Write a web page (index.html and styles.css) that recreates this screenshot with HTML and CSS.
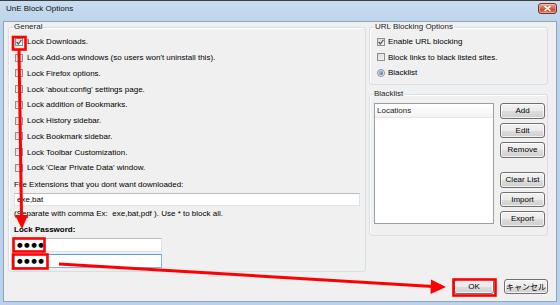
FILE: index.html
```html
<!DOCTYPE html>
<html lang="en">
<head>
    <meta charset="UTF-8">
    <title>UnE Block Options</title>
    <link rel="stylesheet" href="styles.css">
</head>
<body>
    <div class="window">
        <div class="titlebar">
            <span class="title">UnE Block Options</span>
            <span class="close">
                <svg width="9" height="7" viewBox="0 0 9 7"><path d="M1.5 1 L7.5 6 M7.5 1 L1.5 6" stroke="#fff" stroke-width="1.6"/></svg>
            </span>
        </div>

        <div class="client">
            <div class="main">
                <fieldset class="group general">
                    <legend>General</legend>
                    <label class="check"><span class="box checked"><svg width="6" height="6" viewBox="0 0 6 6"><path d="M0.6 3 L2.3 5 L5.4 0.8" fill="none" stroke="#555" stroke-width="1.2"/></svg></span>Lock Downloads.</label>
                    <label class="check"><span class="box"></span>Lock Add-ons windows (so users won't uninstall this).</label>
                    <label class="check"><span class="box"></span>Lock Firefox options.</label>
                    <label class="check"><span class="box"></span>Lock 'about:config' settings page.</label>
                    <label class="check"><span class="box"></span>Lock addition of Bookmarks.</label>
                    <label class="check"><span class="box"></span>Lock History sidebar.</label>
                    <label class="check"><span class="box"></span>Lock Bookmark sidebar.</label>
                    <label class="check"><span class="box"></span>Lock Toolbar Customization.</label>
                    <label class="check"><span class="box"></span>Lock 'Clear Private Data' window.</label>

                    <div class="field-label">File Extensions that you dont want downloaded:</div>
                    <div class="textbox wide">exe,bat</div>
                    <div class="hint">(Separate with comma Ex:&nbsp; exe,bat,pdf ). Use * to block all.</div>
                    <div class="field-label strong">Lock Password:</div>
                    <div class="textbox pass">●●●●</div>
                    <div class="textbox pass focus">●●●●</div>
                </fieldset>

                <div class="side">
                    <fieldset class="group url">
                        <legend>URL Blocking Options</legend>
                        <label class="check short"><span class="box checked"><svg width="6" height="6" viewBox="0 0 6 6"><path d="M0.6 3 L2.3 5 L5.4 0.8" fill="none" stroke="#555" stroke-width="1.2"/></svg></span>Enable URL blocking</label>
                        <label class="check short"><span class="box"></span>Block links to black listed sites.</label>
                        <label class="check short"><span class="radio"><span class="dot"></span></span>Blacklist</label>
                    </fieldset>

                    <fieldset class="group blacklist">
                        <legend>Blacklist</legend>
                        <div class="list-row">
                            <div class="listbox">
                                <div class="list-head">Locations</div>
                            </div>
                            <div class="list-buttons">
                                <button class="btn">Add</button>
                                <button class="btn">Edit</button>
                                <button class="btn">Remove</button>
                                <button class="btn spaced">Clear List</button>
                                <button class="btn">Import</button>
                                <button class="btn">Export</button>
                            </div>
                        </div>
                    </fieldset>
                </div>
            </div>

            <div class="footer">
                <button class="btn ok">OK</button>
                <button class="btn cancel">キャンセル</button>
            </div>
        </div>
    </div>

    <!-- red annotations drawn over the dialog -->
    <svg class="marks" width="560" height="305" viewBox="0 0 560 305">
        <g fill="none" stroke="#f00" stroke-width="2.6">
            <rect x="13" y="37" width="12.5" height="12.5"/>
            <rect x="13.5" y="238.5" width="31" height="13"/>
            <rect x="13" y="254.5" width="34.5" height="14"/>
            <rect x="453.5" y="279.5" width="42" height="16"/>
        </g>
        <g stroke="#f00" stroke-width="3" fill="#f00">
            <line x1="19" y1="50" x2="21.5" y2="217"/>
            <polygon points="15,215 28,215 22,229" stroke="none"/>
            <line x1="59" y1="264" x2="433" y2="286.5"/>
            <polygon points="431,279.5 446,287 430.5,294" stroke="none"/>
        </g>
    </svg>
</body>
</html>
```

FILE: styles.css
```css
* {
    box-sizing: border-box;
}
html, body {
    margin: 0;
    padding: 0;
}
body {
    position: relative;
    width: 560px;
    height: 305px;
    overflow: hidden;
    font-family: "Liberation Sans", Arial, sans-serif;
    font-size: 8px;
    color: #000;
    background: #b9d1ea;
}
.window {
    width: 560px;
    height: 305px;
    display: flex;
    flex-direction: column;
    background: linear-gradient(#c9dcf0, #b9d1ea 30px, #b9d1ea);
    border-top: 1px solid #3c3c3c;
    padding: 0 3px 3px 3px;
}
.titlebar {
    height: 20px;
    display: flex;
    justify-content: space-between;
    align-items: flex-start;
}
.title {
    padding: 3px 0 0 3px;
    line-height: 10px;
    color: #111;
}
.close {
    width: 19px;
    height: 11px;
    margin-top: 2px;
    display: flex;
    align-items: center;
    justify-content: center;
    border: 1px solid #7a2f25;
    border-radius: 3px;
    background: linear-gradient(#e8a99c, #d0644f 50%, #c3452f 51%, #d77a5c);
    box-shadow: inset 0 0 0 1px rgba(255,255,255,0.35);
}
.client {
    flex: 1;
    background: #f0f0f0;
    border: 1px solid #8fa5bd;
    padding: 0 8px 0 4px;
}
.main {
    display: flex;
    align-items: flex-start;
    gap: 3px;
}

/* group boxes */
.group {
    margin: 0;
    min-width: 0;
    border: 1px solid #d5dfe5;
    border-radius: 3px;
    box-shadow: inset 1px 1px 0 #fff;
}
.group legend {
    padding: 0 1px;
    margin-left: -1px;
    line-height: 10px;
    color: #1c1c1c;
}
.general {
    width: 358px;
    padding: 2px 5px 3px 5px;
}
.side {
    width: 179px;
    display: flex;
    flex-direction: column;
}
.url {
    padding: 2px 4px 3px 7px;
}
.url legend {
    margin-left: -3px;
}
.blacklist {
    margin-top: 4.5px;
    padding: 4px 2px 8px 4px;
}

/* checkboxes */
.check {
    display: flex;
    align-items: center;
    height: 15.75px;
    white-space: nowrap;
}
.check.short {
    height: 15.5px;
}
.box {
    width: 8px;
    height: 8px;
    margin: 0 4px 0 1px;
    display: flex;
    align-items: center;
    justify-content: center;
    border: 1px solid #8e8f8f;
    background: linear-gradient(135deg, #d9d9d9, #f6f6f6);
}
.short .box {
    margin-left: 0;
    margin-right: 3px;
}
.radio {
    width: 8px;
    height: 8px;
    margin-right: 3px;
    display: flex;
    align-items: center;
    justify-content: center;
    border: 1px solid #8e8f8f;
    border-radius: 50%;
    background: linear-gradient(135deg, #dcdcdc, #f8f8f8);
}
.dot {
    width: 4px;
    height: 4px;
    border-radius: 50%;
    background: radial-gradient(circle at 35% 35%, #8fc4f2, #1c5da8);
}

/* text fields */
.field-label {
    margin-top: 4px;
    line-height: 10px;
}
.field-label.strong {
    margin-top: 6px;
    font-weight: bold;
}
.hint {
    margin-top: 3px;
    line-height: 10px;
}
.textbox {
    height: 13px;
    margin-top: 3px;
    padding-left: 2px;
    line-height: 11px;
    background: #fff;
    border: 1px solid #dfe3e8;
    border-top-color: #b9bdc3;
}
.textbox.wide {
    width: 346px;
}
.textbox.pass {
    width: 148px;
    height: 14px;
    line-height: 12px;
    font-family: "DejaVu Sans", sans-serif;
    font-size: 6.5px;
    letter-spacing: 1.4px;
}
.textbox.pass + .textbox.pass {
    margin-top: 2px;
}
.textbox.focus {
    border-color: #7eb4ea;
    border-top-color: #569de5;
}

/* blacklist */
.list-row {
    display: flex;
    gap: 6px;
}
.listbox {
    width: 120px;
    height: 121px;
    background: #fff;
    border: 1px solid #9aa0a8;
}
.list-head {
    height: 14px;
    padding-left: 2px;
    line-height: 13px;
    color: #222;
    border-bottom: 1px solid #e5e5e5;
    background: linear-gradient(#fff, #f4f4f4);
}
.list-buttons {
    width: 45px;
    display: flex;
    flex-direction: column;
    gap: 4px;
}
.btn {
    height: 15.5px;
    padding: 0;
    font-family: "Liberation Sans", Arial, sans-serif;
    font-size: 8px;
    color: #000;
    border: 1px solid #707070;
    border-radius: 3px;
    background: linear-gradient(#f2f2f2, #ebebeb 50%, #dddddd 51%, #cfcfcf);
    box-shadow: inset 0 0 0 1px rgba(255,255,255,0.7);
}
.btn.spaced {
    margin-top: 10.5px;
}

/* dialog buttons */
.footer {
    display: flex;
    justify-content: flex-end;
    gap: 10px;
    margin-top: 7.5px;
}
.btn.ok {
    width: 40px;
    height: 15px;
}
.btn.cancel {
    width: 44px;
    height: 15px;
    font-family: "Liberation Sans", "Noto Sans CJK JP", sans-serif;
}

.marks {
    position: absolute;
    top: 0;
    left: 0;
    pointer-events: none;
}
```
